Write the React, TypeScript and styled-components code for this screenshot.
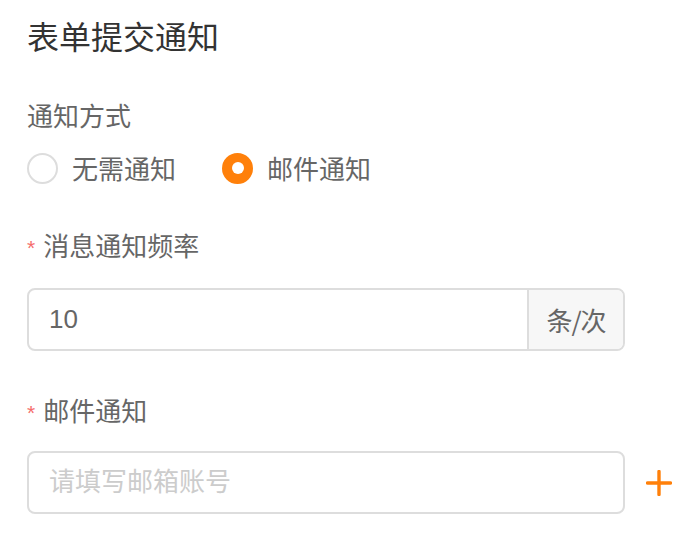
import React, { useState } from "react";
import styled, { createGlobalStyle } from "styled-components";

const Global = createGlobalStyle`
  html, body { margin: 0; padding: 0; background: #ffffff; }
  body { font-family: "Noto Sans CJK SC", "Noto Sans", sans-serif; }
  * { box-sizing: border-box; }
`;

const ORANGE = "#ff800a";

const Page = styled.div`
  width: 692px;
  padding: 13px 20px 0 27px;
`;

const Title = styled.h1`
  margin: 0 0 40px;
  font-size: 32px;
  line-height: 44px;
  font-weight: 400;
  color: #333333;
`;

const Form = styled.div`
  display: flex;
  flex-direction: column;
  gap: 41px;
`;

const Item = styled.div<{ $gap: number }>`
  display: flex;
  flex-direction: column;
  gap: ${(p) => p.$gap}px;
`;

const Label = styled.div`
  display: flex;
  align-items: baseline;
  font-size: 26px;
  line-height: 36px;
  color: #666666;
`;

const Required = styled.span`
  font-family: "Liberation Sans", sans-serif;
  font-size: 21px;
  color: #f56c6c;
  margin-right: 8px;
  position: relative;
  top: -1px;
`;

const RadioGroup = styled.div`
  display: flex;
  align-items: center;
  gap: 46px;
  height: 36px;
`;

const RadioOption = styled.label`
  display: flex;
  align-items: center;
  gap: 14px;
  font-size: 26px;
  line-height: 36px;
  color: #666666;
  cursor: pointer;
`;

const RadioCircle = styled.span<{ $checked: boolean }>`
  width: 31px;
  height: 31px;
  border-radius: 50%;
  border: 2px solid ${(p) => (p.$checked ? ORANGE : "#dddddd")};
  background: ${(p) => (p.$checked ? ORANGE : "#ffffff")};
  display: flex;
  align-items: center;
  justify-content: center;
  flex: none;
  &::after {
    content: "";
    width: 12px;
    height: 12px;
    border-radius: 50%;
    background: #ffffff;
    display: ${(p) => (p.$checked ? "block" : "none")};
  }
`;

const FieldRow = styled.div`
  display: grid;
  grid-template-columns: 1fr 26px;
  column-gap: 21px;
  align-items: center;
`;

const InputBox = styled.div`
  display: flex;
  height: 63px;
  border: 2px solid #dddddd;
  border-radius: 8px;
  overflow: hidden;
  background: #ffffff;
`;

const TextInput = styled.input`
  flex: 1;
  min-width: 0;
  border: none;
  outline: none;
  padding: 0 20px;
  font-family: "Liberation Sans", "Noto Sans CJK SC", sans-serif;
  font-size: 26px;
  color: #666666;
  background: transparent;
  &::placeholder {
    font-family: "Noto Sans CJK SC", sans-serif;
    color: #cccccc;
  }
`;

const Addon = styled.div`
  display: flex;
  align-items: center;
  justify-content: center;
  width: 96px;
  flex: none;
  border-left: 2px solid #dddddd;
  background: #f7f7f7;
  font-size: 26px;
  color: #666666;
  font-family: "Noto Sans CJK SC", sans-serif;
  letter-spacing: -1px;
`;

const AddButton = styled.button`
  width: 26px;
  height: 26px;
  padding: 0;
  border: none;
  background: none;
  cursor: pointer;
  display: flex;
  align-items: center;
  justify-content: center;
  color: ${ORANGE};
`;

const PlusIcon = () => (
  <svg width="26" height="26" viewBox="0 0 26 26" fill="none">
    <path d="M13 1.5v23M1.5 13h23" stroke="currentColor" strokeWidth="3.4" strokeLinecap="round" />
  </svg>
);

export default function App() {
  const [mode, setMode] = useState<"none" | "mail">("mail");
  return (
    <Page>
      <Global />
      <Title>表单提交通知</Title>
      <Form>
        <Item $gap={17}>
          <Label>通知方式</Label>
          <RadioGroup>
            <RadioOption onClick={() => setMode("none")}>
              <RadioCircle $checked={mode === "none"} />
              无需通知
            </RadioOption>
            <RadioOption onClick={() => setMode("mail")}>
              <RadioCircle $checked={mode === "mail"} />
              邮件通知
            </RadioOption>
          </RadioGroup>
        </Item>
        <Item $gap={21}>
          <Label>
            <Required>*</Required>消息通知频率
          </Label>
          <FieldRow>
            <InputBox>
              <TextInput defaultValue="10" />
              <Addon>条/次</Addon>
            </InputBox>
          </FieldRow>
        </Item>
        <Item $gap={19}>
          <Label>
            <Required>*</Required>邮件通知
          </Label>
          <FieldRow>
            <InputBox>
              <TextInput placeholder="请填写邮箱账号" />
            </InputBox>
            <AddButton aria-label="添加">
              <PlusIcon />
            </AddButton>
          </FieldRow>
        </Item>
      </Form>
    </Page>
  );
}
